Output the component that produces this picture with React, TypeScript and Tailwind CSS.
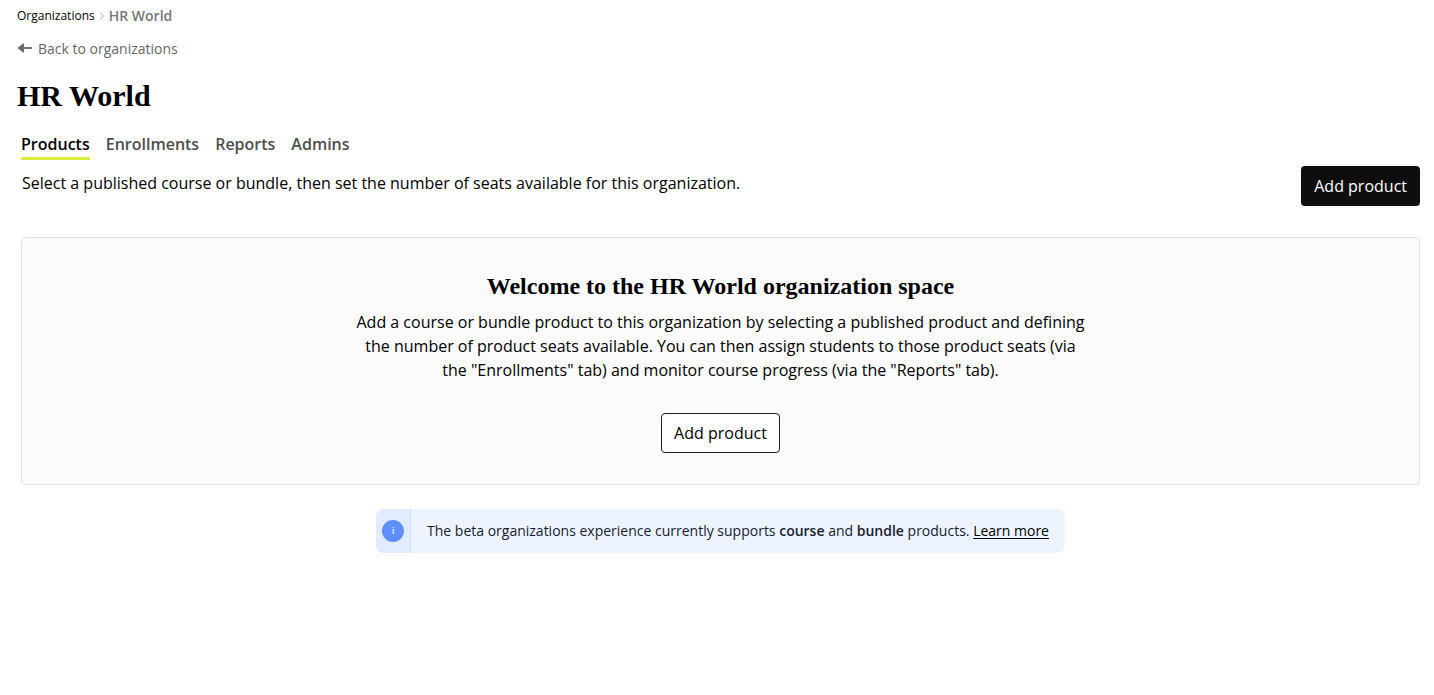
import React from 'react';
import clsx from 'clsx';

const tabs = ['Products', 'Enrollments', 'Reports', 'Admins'];

const BackArrow: React.FC = () => (
  <svg viewBox="0 0 14 10" className="w-[14px] h-[10px]" fill="#6b6b6b" aria-hidden="true">
    <path d="M4.6 0.7 Q6 -0.2 6 1.3 V4 H13.1 Q14 4 14 5 Q14 6 13.1 6 H6 V8.7 Q6 10.2 4.6 9.3 L0.6 6 Q-0.4 5 0.6 4 Z" />
  </svg>
);

const PageHeader: React.FC = () => (
  <header className="px-[17px]">
    <nav aria-label="Breadcrumb" className="flex items-center gap-[5px] h-8">
      <a href="#" className="text-[12px] leading-5">Organizations</a>
      <svg viewBox="0 0 4 8" className="w-1 h-2" fill="none" stroke="#d0d0d0" strokeWidth="1.4" aria-hidden="true">
        <path d="M0.6 1 L3.2 4 L0.6 7" />
      </svg>
      <span className="text-[14px] leading-5 font-semibold text-[#767676]">HR World</span>
    </nav>
    <a href="#" className="inline-flex items-center gap-1.5 h-8 pl-px text-[14px] text-[#666]">
      <BackArrow />
      Back to organizations
    </a>
    <h1 className="mt-2 font-['Liberation_Serif',serif] font-bold text-[30px] leading-12 text-black">HR World</h1>
  </header>
);

const Tabs: React.FC = () => (
  <nav aria-label="Organization" className="flex gap-4 mt-3">
    {tabs.map((tab, i) => (
      <a
        key={tab}
        href="#"
        className={clsx(
          'border-b-3 pb-px text-[16px] leading-6 font-semibold',
          i === 0 ? 'border-[#daee3f] text-black' : 'border-transparent text-[#4d4d4d]',
        )}
      >
        {tab}
      </a>
    ))}
  </nav>
);

const EmptyState: React.FC = () => (
  <section className="mt-[31px] flex flex-col items-center rounded border border-[#e2e2e2] bg-[#fbfbfb] px-4 pt-8 pb-[31px] text-center">
    <h2 className="font-['Liberation_Serif',serif] font-bold text-[24px] leading-8 text-black">
      Welcome to the HR World organization space
    </h2>
    <p className="mt-2 max-w-[740px] text-[16px] leading-6">
      Add a course or bundle product to this organization by selecting a published product and defining{' '}
      <br className="hidden md:block" />
      the number of product seats available. You can then assign students to those product seats (via{' '}
      <br className="hidden md:block" />
      the "Enrollments" tab) and monitor course progress (via the "Reports" tab).
    </p>
    <button type="button" className="mt-[31px] h-10 rounded border border-[#1f1f1f] bg-white px-3 text-[16px] cursor-pointer">
      Add product
    </button>
  </section>
);

const BetaNotice: React.FC = () => (
  <aside className="mt-6 mx-auto flex w-fit overflow-hidden rounded-lg bg-[#edf4ff] text-[14px] leading-5 text-[#172033]">
    <div className="flex w-[35px] shrink-0 items-center justify-center border-r border-[#cbdaf5] bg-[#e1edff]">
      <span className="flex size-[22px] items-center justify-center rounded-full bg-[#5f8fff] text-[8px] leading-none font-semibold text-white">i</span>
    </div>
    <p className="px-4 py-3">
      The beta organizations experience currently supports <b className="font-semibold">course</b> and{' '}
      <b className="font-semibold">bundle</b> products.{' '}
      <a href="#" className="font-medium text-black underline underline-offset-2">Learn more</a>
    </p>
  </aside>
);

export default function App() {
  return (
    <div className="min-h-screen bg-white pb-8 font-['Open_Sans',sans-serif] text-black">
      <PageHeader />
      <main className="pl-[21px] pr-[14px]">
        <Tabs />
        <div className="mt-1.5 flex items-start justify-between gap-4">
          <p className="pt-[5px] pl-px text-[16px] leading-6">
            Select a published course or bundle, then set the number of seats available for this organization.
          </p>
          <button type="button" className="h-10 shrink-0 rounded bg-[#0f0d0e] px-[13px] text-[16px] font-medium text-white cursor-pointer">
            Add product
          </button>
        </div>
        <EmptyState />
        <BetaNotice />
      </main>
    </div>
  );
}
